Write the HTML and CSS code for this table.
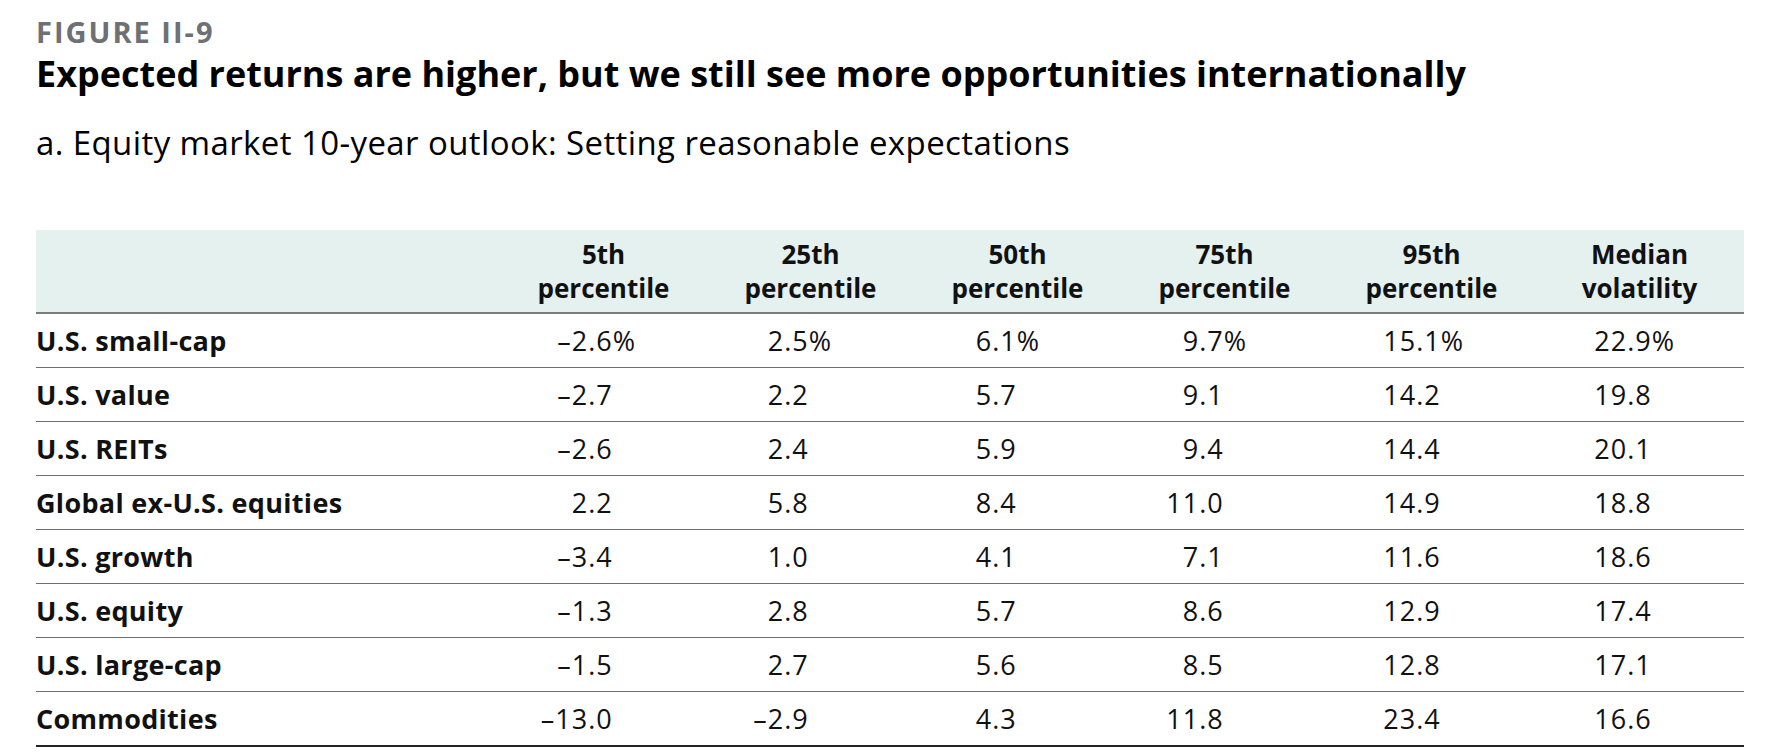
FILE: index.html
```html
<!DOCTYPE html>
<html>
<head>
<meta charset="utf-8">
<link rel="stylesheet" href="styles.css">
</head>
<body>
<div class="page">
  <div class="fig-label">FIGURE II-9</div>
  <h1 class="title">Expected returns are higher, but we still see more opportunities internationally</h1>
  <h2 class="subtitle">a. Equity market 10-year outlook: Setting reasonable expectations</h2>
  <table class="outlook">
    <colgroup>
      <col class="c-label"><col class="c-num"><col class="c-num"><col class="c-num"><col class="c-num"><col class="c-num"><col class="c-last">
    </colgroup>
    <thead>
      <tr>
        <th class="lab"></th>
        <th>5th<br>percentile</th>
        <th>25th<br>percentile</th>
        <th>50th<br>percentile</th>
        <th>75th<br>percentile</th>
        <th>95th<br>percentile</th>
        <th>Median<br>volatility</th>
      </tr>
    </thead>
    <tbody>
      <tr class="first">
        <td class="lab">U.S. small-cap</td>
        <td class="n1">–2.6<i>%</i></td><td class="n2">2.5<i>%</i></td><td class="n3">6.1<i>%</i></td><td class="n4">9.7<i>%</i></td><td class="n5">15.1<i>%</i></td><td class="n6">22.9<i>%</i></td>
      </tr>
      <tr>
        <td class="lab">U.S. value</td>
        <td class="n1">–2.7<i>%</i></td><td class="n2">2.2<i>%</i></td><td class="n3">5.7<i>%</i></td><td class="n4">9.1<i>%</i></td><td class="n5">14.2<i>%</i></td><td class="n6">19.8<i>%</i></td>
      </tr>
      <tr>
        <td class="lab">U.S. REITs</td>
        <td class="n1">–2.6<i>%</i></td><td class="n2">2.4<i>%</i></td><td class="n3">5.9<i>%</i></td><td class="n4">9.4<i>%</i></td><td class="n5">14.4<i>%</i></td><td class="n6">20.1<i>%</i></td>
      </tr>
      <tr>
        <td class="lab">Global ex-U.S. equities</td>
        <td class="n1">2.2<i>%</i></td><td class="n2">5.8<i>%</i></td><td class="n3">8.4<i>%</i></td><td class="n4">11.0<i>%</i></td><td class="n5">14.9<i>%</i></td><td class="n6">18.8<i>%</i></td>
      </tr>
      <tr>
        <td class="lab">U.S. growth</td>
        <td class="n1">–3.4<i>%</i></td><td class="n2">1.0<i>%</i></td><td class="n3">4.1<i>%</i></td><td class="n4">7.1<i>%</i></td><td class="n5">11.6<i>%</i></td><td class="n6">18.6<i>%</i></td>
      </tr>
      <tr>
        <td class="lab">U.S. equity</td>
        <td class="n1">–1.3<i>%</i></td><td class="n2">2.8<i>%</i></td><td class="n3">5.7<i>%</i></td><td class="n4">8.6<i>%</i></td><td class="n5">12.9<i>%</i></td><td class="n6">17.4<i>%</i></td>
      </tr>
      <tr>
        <td class="lab">U.S. large-cap</td>
        <td class="n1">–1.5<i>%</i></td><td class="n2">2.7<i>%</i></td><td class="n3">5.6<i>%</i></td><td class="n4">8.5<i>%</i></td><td class="n5">12.8<i>%</i></td><td class="n6">17.1<i>%</i></td>
      </tr>
      <tr class="last">
        <td class="lab">Commodities</td>
        <td class="n1">–13.0<i>%</i></td><td class="n2">–2.9<i>%</i></td><td class="n3">4.3<i>%</i></td><td class="n4">11.8<i>%</i></td><td class="n5">23.4<i>%</i></td><td class="n6">16.6<i>%</i></td>
      </tr>
    </tbody>
  </table>
</div>
</body>
</html>
```
FILE: styles.css
```css
html, body {
  margin: 0;
  padding: 0;
  background: #ffffff;
}
body {
  font-family: "Open Sans", "Liberation Sans", sans-serif;
  color: #111111;
}
.page {
  padding: 16px 26px 0 36px;
}
.fig-label {
  font-size: 29px;
  line-height: 32px;
  font-weight: 700;
  letter-spacing: 2px;
  color: #6f7073;
}
.title {
  margin: 5px 0 0 0;
  font-size: 36px;
  line-height: 42px;
  font-weight: 700;
  color: #000000;
}
.subtitle {
  margin: 29px 0 0 0;
  font-size: 33px;
  line-height: 38px;
  font-weight: 400;
  letter-spacing: 0.4px;
  color: #000000;
}
.outlook {
  margin-top: 68px;
  width: 1708px;
  border-collapse: collapse;
  table-layout: fixed;
  font-size: 26px;
}
.c-label { width: 464px; }
.c-num { width: 207px; }
.c-last { width: 209px; }
.outlook thead tr {
  background: #e5f1ef;
}
.outlook th {
  height: 82px;
  padding: 0;
  font-weight: 700;
  line-height: 34px;
  text-align: center;
  vertical-align: middle;
  border-bottom: 2px solid #7c7c7c;
}
.outlook td {
  height: 53px;
  padding: 0;
  font-size: 27px;
  line-height: 30px;
  letter-spacing: 1px;
  vertical-align: middle;
  text-align: right;
  border-bottom: 1px solid #6e6e6e;
}
.outlook tr.last td {
  border-bottom: 2px solid #222222;
}
.outlook td.lab {
  text-align: left;
  font-weight: 700;
  letter-spacing: 0.3px;
}
.outlook td i {
  font-style: normal;
  visibility: hidden;
}
.outlook tr.first td i {
  visibility: visible;
}
.outlook td.n1 { padding-right: 71px; }
.outlook td.n2 { padding-right: 82px; }
.outlook td.n3 { padding-right: 81px; }
.outlook td.n4 { padding-right: 81px; }
.outlook td.n5 { padding-right: 71px; }
.outlook td.n6 { padding-right: 69px; }
```
